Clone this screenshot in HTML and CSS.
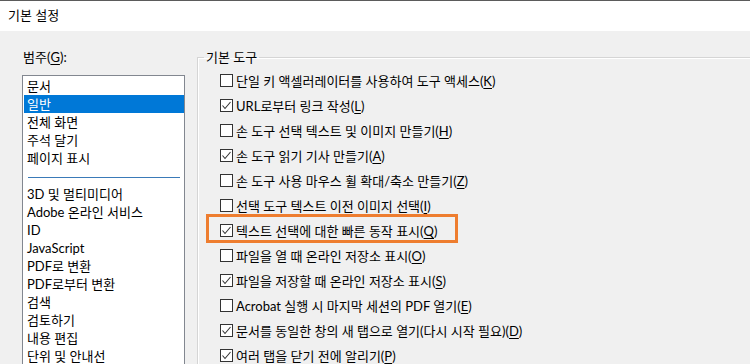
FILE: index.html
```html
<!DOCTYPE html>
<html lang="ko">
<head>
  <meta charset="UTF-8">
  <meta name="viewport" content="width=device-width, initial-scale=1.0">
  <title>기본 설정</title>
  <link rel="stylesheet" href="styles.css">
</head>
<body>
  <header class="titlebar">기본 설정</header>

  <main class="dialog">
    <div class="categories">
      <div class="cat-label">범주(<u>G</u>):</div>
      <ul class="listbox">
        <li>문서</li>
        <li class="selected">일반</li>
        <li>전체 화면</li>
        <li>주석 달기</li>
        <li>페이지 표시</li>
        <li class="sep"></li>
        <li>3D 및 멀티미디어</li>
        <li>Adobe 온라인 서비스</li>
        <li>ID</li>
        <li>JavaScript</li>
        <li>PDF로 변환</li>
        <li>PDF로부터 변환</li>
        <li>검색</li>
        <li>검토하기</li>
        <li>내용 편집</li>
        <li>단위 및 안내선</li>
      </ul>
    </div>

    <fieldset class="group">
      <legend>기본 도구</legend>
      <div class="options">
        <label class="row"><span class="cb"></span><span>단일 키 액셀러레이터를 사용하여 도구 액세스(<u>K</u>)</span></label>
        <label class="row"><span class="cb"><svg viewBox="0 0 11 11"><polyline points="1.5,5.5 4,8.5 9.5,2"/></svg></span><span>URL로부터 링크 작성(<u>L</u>)</span></label>
        <label class="row"><span class="cb"></span><span>손 도구 선택 텍스트 및 이미지 만들기(<u>H</u>)</span></label>
        <label class="row"><span class="cb"><svg viewBox="0 0 11 11"><polyline points="1.5,5.5 4,8.5 9.5,2"/></svg></span><span>손 도구 읽기 기사 만들기(<u>A</u>)</span></label>
        <label class="row"><span class="cb"></span><span>손 도구 사용 마우스 휠 확대/축소 만들기(<u>Z</u>)</span></label>
        <label class="row"><span class="cb"></span><span>선택 도구 텍스트 이전 이미지 선택(<u>I</u>)</span></label>
        <label class="row marked"><span class="cb"><svg viewBox="0 0 11 11"><polyline points="1.5,5.5 4,8.5 9.5,2"/></svg></span><span>텍스트 선택에 대한 빠른 동작 표시(<u>Q</u>)</span></label>
        <label class="row"><span class="cb"></span><span>파일을 열 때 온라인 저장소 표시(<u>O</u>)</span></label>
        <label class="row"><span class="cb"><svg viewBox="0 0 11 11"><polyline points="1.5,5.5 4,8.5 9.5,2"/></svg></span><span>파일을 저장할 때 온라인 저장소 표시(<u>S</u>)</span></label>
        <label class="row"><span class="cb"></span><span>Acrobat 실행 시 마지막 세션의 PDF 열기(<u>E</u>)</span></label>
        <label class="row"><span class="cb"><svg viewBox="0 0 11 11"><polyline points="1.5,5.5 4,8.5 9.5,2"/></svg></span><span>문서를 동일한 창의 새 탭으로 열기(다시 시작 필요)(<u>D</u>)</span></label>
        <label class="row"><span class="cb"><svg viewBox="0 0 11 11"><polyline points="1.5,5.5 4,8.5 9.5,2"/></svg></span><span>여러 탭을 닫기 전에 알리기(<u>P</u>)</span></label>
      </div>
    </fieldset>
  </main>
</body>
</html>
```

FILE: styles.css
```css
html, body {
  height: 364px;
  overflow: hidden;
}
body {
  font-family: Lato, "Noto Sans CJK KR", sans-serif;
  font-size: 13px;
  color: #000;
  background: #f0f0f0;
  margin: 0;
}
u {
  text-decoration-thickness: 1px;
  text-underline-offset: 2px;
}
.titlebar {
  background: white;
  border-top: 1px solid #5b5b5b;
  height: 30px;
  line-height: 28px;
  padding-left: 8px;
}
.dialog {
  display: flex;
  align-items: flex-start;
  gap: 12px;
  padding: 17px 0 0 22px;
}
.categories {
  width: 163px;
  flex-shrink: 0;
}
.cat-label {
  line-height: 18px;
  padding-left: 1px;
  margin-bottom: 9px;
}
.listbox {
  list-style: none;
  margin: 0;
  padding: 1px 0 0;
  background: white;
  border: 1px solid #828790;
  height: 400px;
}
.listbox li {
  height: 18px;
  line-height: 18px;
  padding-left: 4px;
  white-space: nowrap;
}
.listbox li.selected {
  background: #0078d7;
  color: white;
  margin-left: 1px;
  padding-left: 3px;
}
.listbox li.sep {
  height: 1px;
  background: #3a7ab8;
  margin: 10px 4px 7px 5px;
  padding: 0;
}
.group {
  margin: 0;
  padding: 0;
  width: 620px;
  height: 400px;
  flex-shrink: 0;
  border: 1px solid #d5d5d5;
  box-shadow: inset 1px 1px 0 white;
}
.group legend {
  margin-left: 6px;
  padding: 0 2px;
  line-height: 18px;
}
.options {
  display: flex;
  flex-direction: column;
  padding: 2px 0 0 22px;
}
.row {
  position: relative;
  display: flex;
  align-items: center;
  align-self: flex-start;
  gap: 3px;
  height: 25px;
  white-space: nowrap;
}
.cb {
  width: 13px;
  height: 13px;
  box-sizing: border-box;
  border: 1px solid #333;
  background: white;
  display: flex;
}
.cb svg {
  width: 11px;
  height: 11px;
  fill: none;
  stroke: #333;
  stroke-width: 1.1;
}
.row.marked::after {
  content: "";
  position: absolute;
  left: -14px;
  right: -21px;
  top: -4px;
  bottom: 0;
  border: 3px solid #ee7d2f;
}
```
